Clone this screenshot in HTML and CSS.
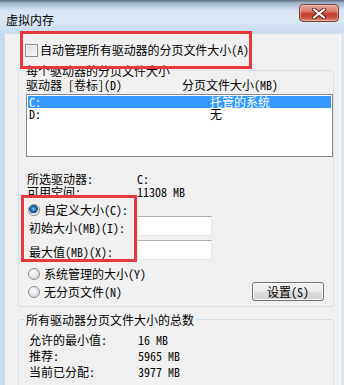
FILE: index.html
```html
<!DOCTYPE html>
<html lang="zh-CN">

<head>
    <meta charset="UTF-8">
    <title>虚拟内存</title>
    <link rel="stylesheet" href="styles.css">
</head>

<body>
    <div class="window">
        <div class="titlebar">
            <span class="title">虚拟内存</span>
            <div class="close-btn">
                <svg width="14" height="11" viewBox="0 0 14 11">
                    <path d="M2 1.5 L12 9.5 M12 1.5 L2 9.5" stroke="#5b2520" stroke-width="4" stroke-linecap="round" />
                    <path d="M2 1.5 L12 9.5 M12 1.5 L2 9.5" stroke="#fff" stroke-width="2.2" stroke-linecap="round" />
                </svg>
            </div>
        </div>

        <div class="frame">
            <div class="frame-left"></div>
            <div class="content">
                <div class="auto-row"><span class="checkbox"></span>自动管理所有驱动器的分页文件大小(A)</div>

                <div class="group group-drives">
                    <div class="group-title">每个驱动器的分页文件大小</div>
                    <div class="list-head">
                        <span class="col-drive">驱动器 [卷标](D)</span>
                        <span>分页文件大小(MB)</span>
                    </div>
                    <div class="listbox">
                        <div class="list-row selected"><span class="col-drive">C:</span><span>托管的系统</span></div>
                        <div class="list-row"><span class="col-drive">D:</span><span>无</span></div>
                    </div>

                    <div class="info">
                        <span>所选驱动器:</span><span>C:</span>
                        <span>可用空间:</span><span>11308 MB</span>
                    </div>

                    <div class="radio-row custom"><span class="radio checked"></span>自定义大小(C):</div>
                    <div class="size-field"><span class="size-label">初始大小(MB)(I):</span><span class="textbox"></span></div>
                    <div class="size-field"><span class="size-label">最大值(MB)(X):</span><span class="textbox"></span></div>

                    <div class="bottom-opts">
                        <div class="radios">
                            <div class="radio-row"><span class="radio"></span>系统管理的大小(Y)</div>
                            <div class="radio-row"><span class="radio"></span>无分页文件(N)</div>
                        </div>
                        <div class="set-btn">设置(S)</div>
                    </div>
                </div>

                <div class="group group-total">
                    <div class="group-title">所有驱动器分页文件大小的总数</div>
                    <div class="totals">
                        <span>允许的最小值:</span><span>16 MB</span>
                        <span>推荐:</span><span>5965 MB</span>
                        <span>当前已分配:</span><span>3977 MB</span>
                    </div>
                </div>
            </div>
            <div class="frame-right"></div>
        </div>

        <!-- red highlight marks over the dialog -->
        <div class="mark mark-auto"></div>
        <div class="mark mark-custom"></div>
    </div>
</body>

</html>
```

FILE: styles.css
```css
body {
    margin: 0;
    overflow: hidden;
    background-color: #c6d9ee;
    font-family: "Noto Sans Mono CJK SC", "Noto Sans CJK SC", monospace;
    font-size: 12px;
    line-height: 14px;
    color: #000;
}

.window {
    position: relative;
    width: 344px;
    height: 385px;
    overflow: hidden;
}

.titlebar {
    height: 33px;
    display: flex;
    align-items: flex-start;
    justify-content: space-between;
    background: linear-gradient(to bottom, #5d6b7c 0, #9fb4ca 3px, #d4e3f2 10px, #dce8f4 20px, #c8dbee 33px);
}

.title {
    margin: 13px 0 0 6px;
    line-height: 14px;
    font-size: 12px;
}

.close-btn {
    width: 40px;
    height: 18px;
    margin: 4px 5px 0 0;
    box-sizing: border-box;
    border: 1px solid #7b3c36;
    border-radius: 4px;
    display: flex;
    justify-content: center;
    align-items: center;
    background: linear-gradient(to bottom, #e9ab9e 0%, #d9786a 40%, #c4402f 55%, #c84a39 75%, #dc8a72 100%);
    box-shadow: inset 0 0 0 1px rgba(255, 255, 255, 0.35);
}

.frame {
    display: flex;
    height: 352px;
}

.frame-left {
    width: 5px;
    background-color: #c6d9ee;
}

.frame-right {
    width: 3px;
    background-color: #dbe6f1;
}

.content {
    flex: 1;
    background-color: #f0f0f0;
    border-left: 1px solid #eef3f8;
    border-top: 1px solid #d3dbe4;
    border-right: 1px solid #fafafa;
    overflow: hidden;
}

.auto-row {
    display: flex;
    align-items: center;
    gap: 2px;
    margin: 9px 0 0 19px;
    line-height: 14px;
    letter-spacing: -0.05px;
}

.checkbox {
    width: 11px;
    height: 11px;
    border: 1px solid #8e8f8f;
    background: linear-gradient(to bottom right, #dcdcdc, #f7f7f7);
    box-shadow: inset 0 0 0 1px #f4f4f4;
}

.group {
    margin-left: 12px;
    width: 316px;
    box-sizing: border-box;
    border: 1px solid #d5dfe5;
    border-radius: 3px;
    padding-left: 7px;
}

.group-drives {
    margin-top: 13px;
    padding-bottom: 5px;
}

.group-total {
    margin-top: 12px;
    height: 80px;
}

.group-title {
    width: fit-content;
    margin: -6px 0 0 -2px;
    padding: 0 2px;
    line-height: 12px;
    background-color: #f0f0f0;
}

.list-head {
    display: flex;
    margin-top: 1px;
    line-height: 14px;
}

.col-drive {
    width: 156px;
    flex-shrink: 0;
}

.listbox {
    margin-top: 2px;
    height: 63px;
    box-sizing: border-box;
    border: 1px solid #828790;
    background-color: #fff;
    padding: 1px;
}

.list-row {
    display: flex;
    height: 12px;
    line-height: 12px;
    padding-left: 1px;
}

.list-row .col-drive {
    width: 181px;
}

.list-row.selected {
    background-color: #3399ff;
    color: #fff;
}

.info,
.totals {
    display: grid;
    grid-template-columns: 110px auto;
    line-height: 13px;
}

.info {
    margin-top: 15px;
    padding-left: 1px;
}

.totals {
    margin-top: 6px;
    padding-left: 3px;
    line-height: 16px;
    grid-template-columns: 109px auto;
}

.radio-row {
    display: flex;
    align-items: center;
    gap: 4px;
    line-height: 14px;
    padding-left: 2px;
}

.radio-row.custom {
    margin-top: 6px;
    height: 12px;
}

.radio {
    width: 10px;
    height: 10px;
    border-radius: 50%;
    border: 1px solid #8c8c8c;
    background: radial-gradient(circle at 40% 35%, #ffffff, #dcdcdc 70%);
}

.radio.checked {
    background: radial-gradient(circle at 45% 40%, #8fd0f5 0, #2a7dbc 2px, #174f86 4px, #e6e6e6 4.5px, #f5f5f5 100%);
}

.size-field {
    display: flex;
    align-items: center;
    height: 20px;
    padding-left: 3px;
}

.size-field + .size-field {
    margin-top: 4px;
}

.size-label {
    width: 108px;
    padding-top: 3px;
}

.textbox {
    width: 75px;
    height: 20px;
    box-sizing: border-box;
    background-color: #fff;
    border: 1px solid #e3e9ef;
    border-top-color: #abadb3;
}

.bottom-opts {
    display: flex;
    margin-top: 7px;
}

.radios {
    display: flex;
    flex-direction: column;
    gap: 4px;
}

.set-btn {
    margin: 15px 9px 0 auto;
    width: 72px;
    height: 19px;
    box-sizing: border-box;
    border: 1px solid #707070;
    border-radius: 3px;
    display: flex;
    justify-content: center;
    align-items: center;
    line-height: 14px;
    background: linear-gradient(to bottom, #f2f2f2 0%, #ebebeb 48%, #dddddd 52%, #cfcfcf 100%);
    box-shadow: inset 0 0 0 1px #fcfcfc;
}

.mark {
    position: absolute;
    border: 3px solid #e8383d;
    box-sizing: border-box;
}

.mark-auto {
    left: 20px;
    top: 31px;
    width: 232px;
    height: 38px;
}

.mark-custom {
    left: 21px;
    top: 195px;
    width: 116px;
    height: 67px;
}
```
